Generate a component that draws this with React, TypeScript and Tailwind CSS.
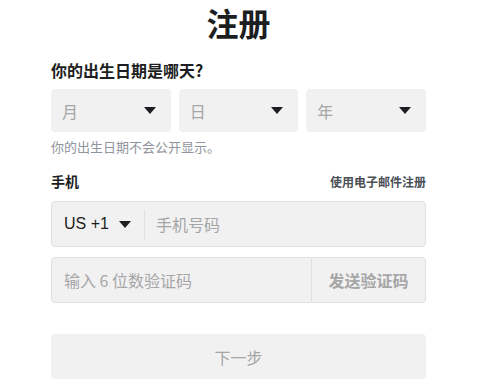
import React from "react";

const FONT = { fontFamily: '"Noto Sans CJK SC", "Noto Sans", sans-serif' };

function Caret({ className = "" }: { className?: string }) {
  return (
    <svg width="12" height="7" viewBox="0 0 12 7" className={className}>
      <path d="M0 0 H12 L6 7 Z" fill="#1c1e21" />
    </svg>
  );
}

function DateSelect({ label }: { label: string }) {
  return (
    <div className="flex h-[43px] w-[120px] items-center justify-between rounded-[4px] bg-[#f1f1f2] pl-[11px] pr-[15px]">
      <span className="text-[16px] text-[#a6a6a6]">{label}</span>
      <Caret />
    </div>
  );
}

export default function App() {
  return (
    <div className="min-h-[383px] bg-white text-[#1c1e21]" style={FONT}>
      <div className="ml-[51px] w-[375px]">
        <h1 className="text-center text-[32px] font-bold leading-[44px]">注册</h1>

        <div className="mt-[14px] text-[16px] font-bold leading-[24px]">你的出生日期是哪天?</div>
        <div className="mt-[7px] flex gap-[8px]">
          <DateSelect label="月" />
          <DateSelect label="日" />
          <DateSelect label="年" />
        </div>
        <div className="mt-[6px] text-[13px] leading-[18px] text-[#90949c]">你的出生日期不会公开显示。</div>

        <div className="mt-[15px] flex items-end justify-between">
          <span className="text-[14px] font-bold leading-[20px]">手机</span>
          <span className="text-[12px] font-bold leading-[18px] text-[#4b4f56]">使用电子邮件注册</span>
        </div>

        <div className="mt-[10px] flex h-[46px] items-center rounded-[4px] border border-[#dddfe2] bg-[#f1f1f2]">
          <div className="flex items-center gap-[10px] pl-[12px] pr-[13px]">
            <span className="text-[16px]" style={{ fontFamily: '"Liberation Sans", Arial, sans-serif' }}>US +1</span>
            <Caret />
          </div>
          <div className="h-[29px] w-px bg-[#dddfe2]" />
          <span className="ml-[11px] text-[16px] text-[#a6a6a6]">手机号码</span>
        </div>

        <div className="mt-[10px] flex h-[46px]">
          <div className="flex flex-1 items-center rounded-l-[4px] border border-[#dddfe2] bg-[#f1f1f2] pl-[12px]">
            <span className="text-[16px] text-[#a6a6a6]">输入 6 位数验证码</span>
          </div>
          <div className="flex w-[114px] items-center justify-center rounded-r-[4px] border border-l-0 border-[#dddfe2] bg-[#f1f1f2]">
            <span className="text-[16px] font-bold text-[#a6a6a6]">发送验证码</span>
          </div>
        </div>

        <div className="mt-[31px] flex h-[45px] items-center justify-center rounded-[4px] bg-[#f1f1f2]">
          <span className="text-[16px] text-[#a6a6a6]">下一步</span>
        </div>
      </div>
    </div>
  );
}
